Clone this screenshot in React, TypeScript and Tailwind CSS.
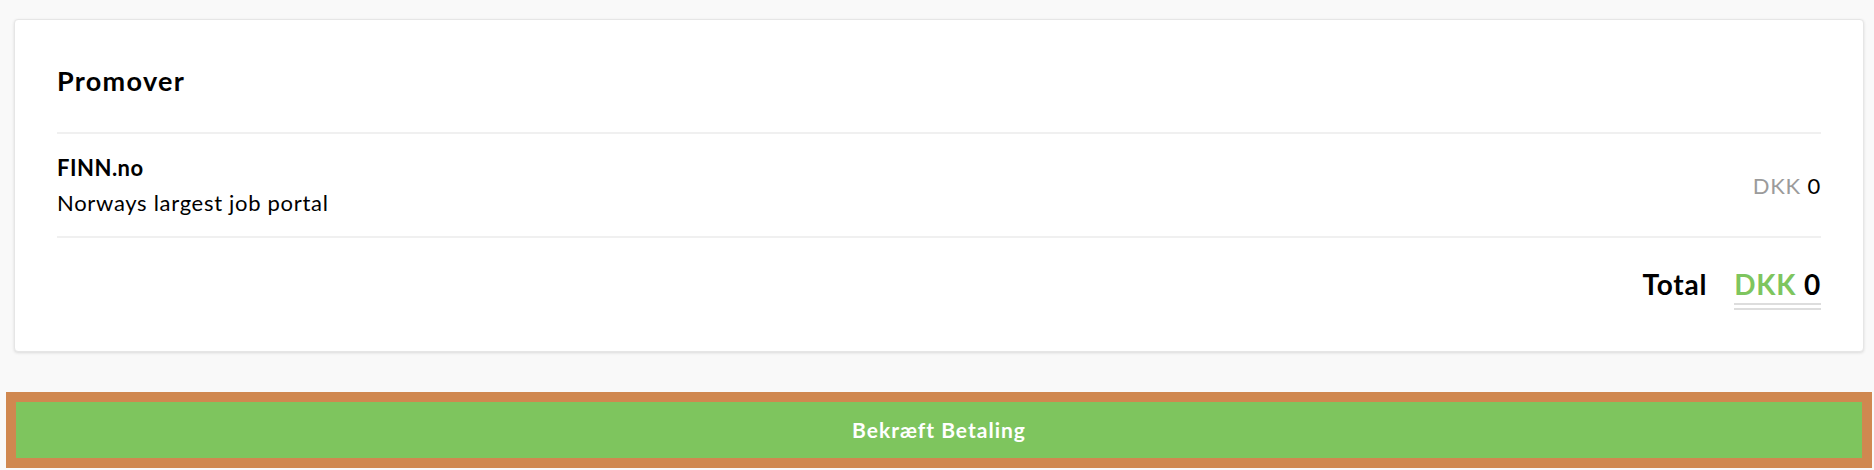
import React from 'react';

const font = { fontFamily: 'Lato, "Open Sans", Arial, sans-serif' };

export default function App() {
  return (
    <div className="min-h-[470px] bg-[#f9f9f9] pt-[19px] text-black" style={font}>
      {/* Summary card */}
      <div className="ml-[14px] mr-[10px] rounded-[4px] border border-[#e6e6e6] bg-white px-[42px] shadow-[0_1px_3px_rgba(0,0,0,0.12)]">
        <h2 className="pt-[43px] pb-[33px] text-[27px] font-bold leading-[36px] tracking-[1.3px]">Promover</h2>

        <div className="flex h-[106px] items-center justify-between border-y-2 border-[#f0f0f0]">
          <div>
            <div className="text-[22px] font-bold leading-[35px] tracking-[0.5px]">FINN.no</div>
            <div className="text-[22px] leading-[35px] tracking-[0.7px]">Norways largest job portal</div>
          </div>
          <div className="text-[22px] tracking-[0.8px]">
            <span className="text-[#9b9b9b]">DKK</span> <span>0</span>
          </div>
        </div>

        <div className="flex items-start justify-end gap-[27px] pt-[27px] pb-[41px]">
          <span className="text-[28px] font-bold leading-[38px] tracking-[0.8px]">Total</span>
          <span className="border-b-[7px] border-double border-[#dddddd] text-[28px] font-bold leading-[38px] tracking-[0.8px]">
            <span className="text-[#7ec55e]">DKK</span> 0
          </span>
        </div>
      </div>

      {/* Confirm button */}
      <div className="mt-[40px] ml-[6px] mr-[2px] border-[10px] border-[#d08850]">
        <button className="flex h-[56px] w-full items-center justify-center bg-[#7ec55e] text-[21px] font-bold tracking-[1px] text-white">
          Bekræft Betaling
        </button>
      </div>
    </div>
  );
}
